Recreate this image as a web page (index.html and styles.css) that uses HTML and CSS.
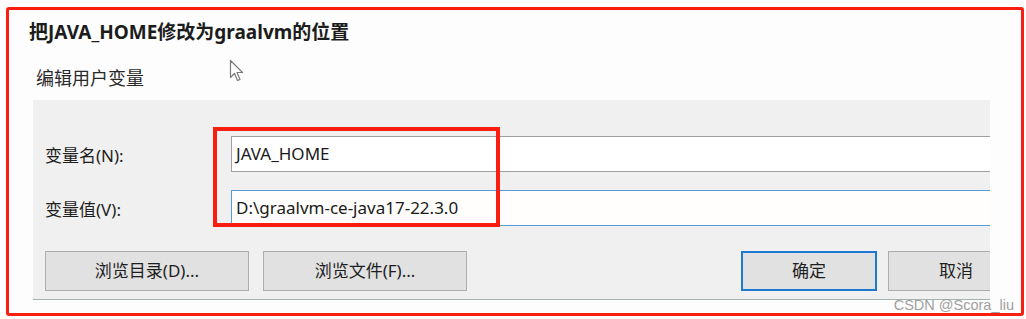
FILE: index.html
```html
<!DOCTYPE html>
<html lang="zh-CN">
<head>
<meta charset="utf-8">
<title>编辑用户变量</title>
<link rel="stylesheet" href="styles.css">
</head>
<body>
<div class="frame">
  <h1 class="title">把JAVA_HOME修改为graalvm的位置</h1>
  <div class="subtitle">编辑用户变量</div>
  <svg class="cursor" width="16" height="24" viewBox="0 0 16 24" aria-hidden="true">
    <path d="M1.5 1.5 L1.5 18.5 L5.5 14.5 L8.5 21.5 L11 20.5 L8 13.5 L13.5 13.5 Z" fill="#ffffff" stroke="#7a7a7a" stroke-width="1.2" stroke-linejoin="round"/>
  </svg>
  <div class="panel">
    <div class="fields">
      <label class="label">变量名(N):</label>
      <div class="input">JAVA_HOME</div>
      <label class="label">变量值(V):</label>
      <div class="input focused">D:\graalvm-ce-java17-22.3.0</div>
    </div>
    <div class="buttons">
      <div class="btn wide">浏览目录(D)...</div>
      <div class="btn wide">浏览文件(F)...</div>
      <div class="btn ok">确定</div>
      <div class="btn cancel">取消</div>
    </div>
    <div class="highlight"></div>
  </div>
  <div class="watermark">CSDN @Scora_liu</div>
</div>
</body>
</html>
```

FILE: styles.css
```css
html, body {
  margin: 0;
  padding: 0;
  background: #ffffff;
}
body {
  padding: 7px 2px 0 6px;
  font-family: "Noto Sans", "Noto Sans CJK SC", sans-serif;
  color: #1e1e1e;
}
.frame {
  position: relative;
  box-sizing: border-box;
  width: 1018px;
  height: 309px;
  border: 3.5px solid #fa1e10;
  border-radius: 3px;
  background: #fdfdfd;
  padding: 10px 0 0 20px;
}
.title {
  margin: 0;
  font-size: 19px;
  line-height: 24px;
  font-weight: 700;
  color: #1c1c1c;
}
.subtitle {
  margin: 22px 0 0 7px;
  font-size: 18px;
  line-height: 24px;
  color: #2a2a2a;
}
.cursor {
  position: absolute;
  left: 220px;
  top: 49px;
}
.panel {
  position: relative;
  box-sizing: border-box;
  margin: 10px 0 0 4px;
  width: 957px;
  height: 200px;
  background: #f0f0f0;
  border-bottom: 1px solid #a3b3ad;
  overflow: hidden;
  padding: 36px 0 0 12px;
}
.fields {
  display: grid;
  grid-template-columns: 186px 800px;
  row-gap: 18px;
  align-items: center;
}
.label {
  font-size: 17px;
  color: #1e1e1e;
}
.input {
  box-sizing: border-box;
  height: 36px;
  border: 1px solid #a0a0a0;
  background: #ffffff;
  padding-left: 4px;
  font-size: 17px;
  line-height: 34px;
  color: #1a1a1a;
}
.input.focused {
  border-color: #5b9bd5;
  background: #fffefc;
}
.buttons {
  display: flex;
  margin-top: 25px;
}
.btn {
  box-sizing: border-box;
  flex: none;
  height: 40px;
  border: 1px solid #adadad;
  background: #e1e1e1;
  font-size: 17px;
  line-height: 38px;
  text-align: center;
  color: #1e1e1e;
}
.btn.wide {
  width: 204px;
  margin-right: 14px;
}
.btn.ok {
  width: 136px;
  margin-left: 260px;
  border: 2px solid #1e7ad0;
  line-height: 36px;
}
.btn.cancel {
  width: 136px;
  margin-left: 11px;
}
.highlight {
  position: absolute;
  left: 180px;
  top: 27px;
  width: 287px;
  height: 100px;
  box-sizing: border-box;
  border: 4px solid #fa1e10;
}
.watermark {
  position: absolute;
  right: 7px;
  bottom: 0;
  font-family: "Liberation Sans", sans-serif;
  font-size: 14.5px;
  color: #a0a0a0;
}
```
